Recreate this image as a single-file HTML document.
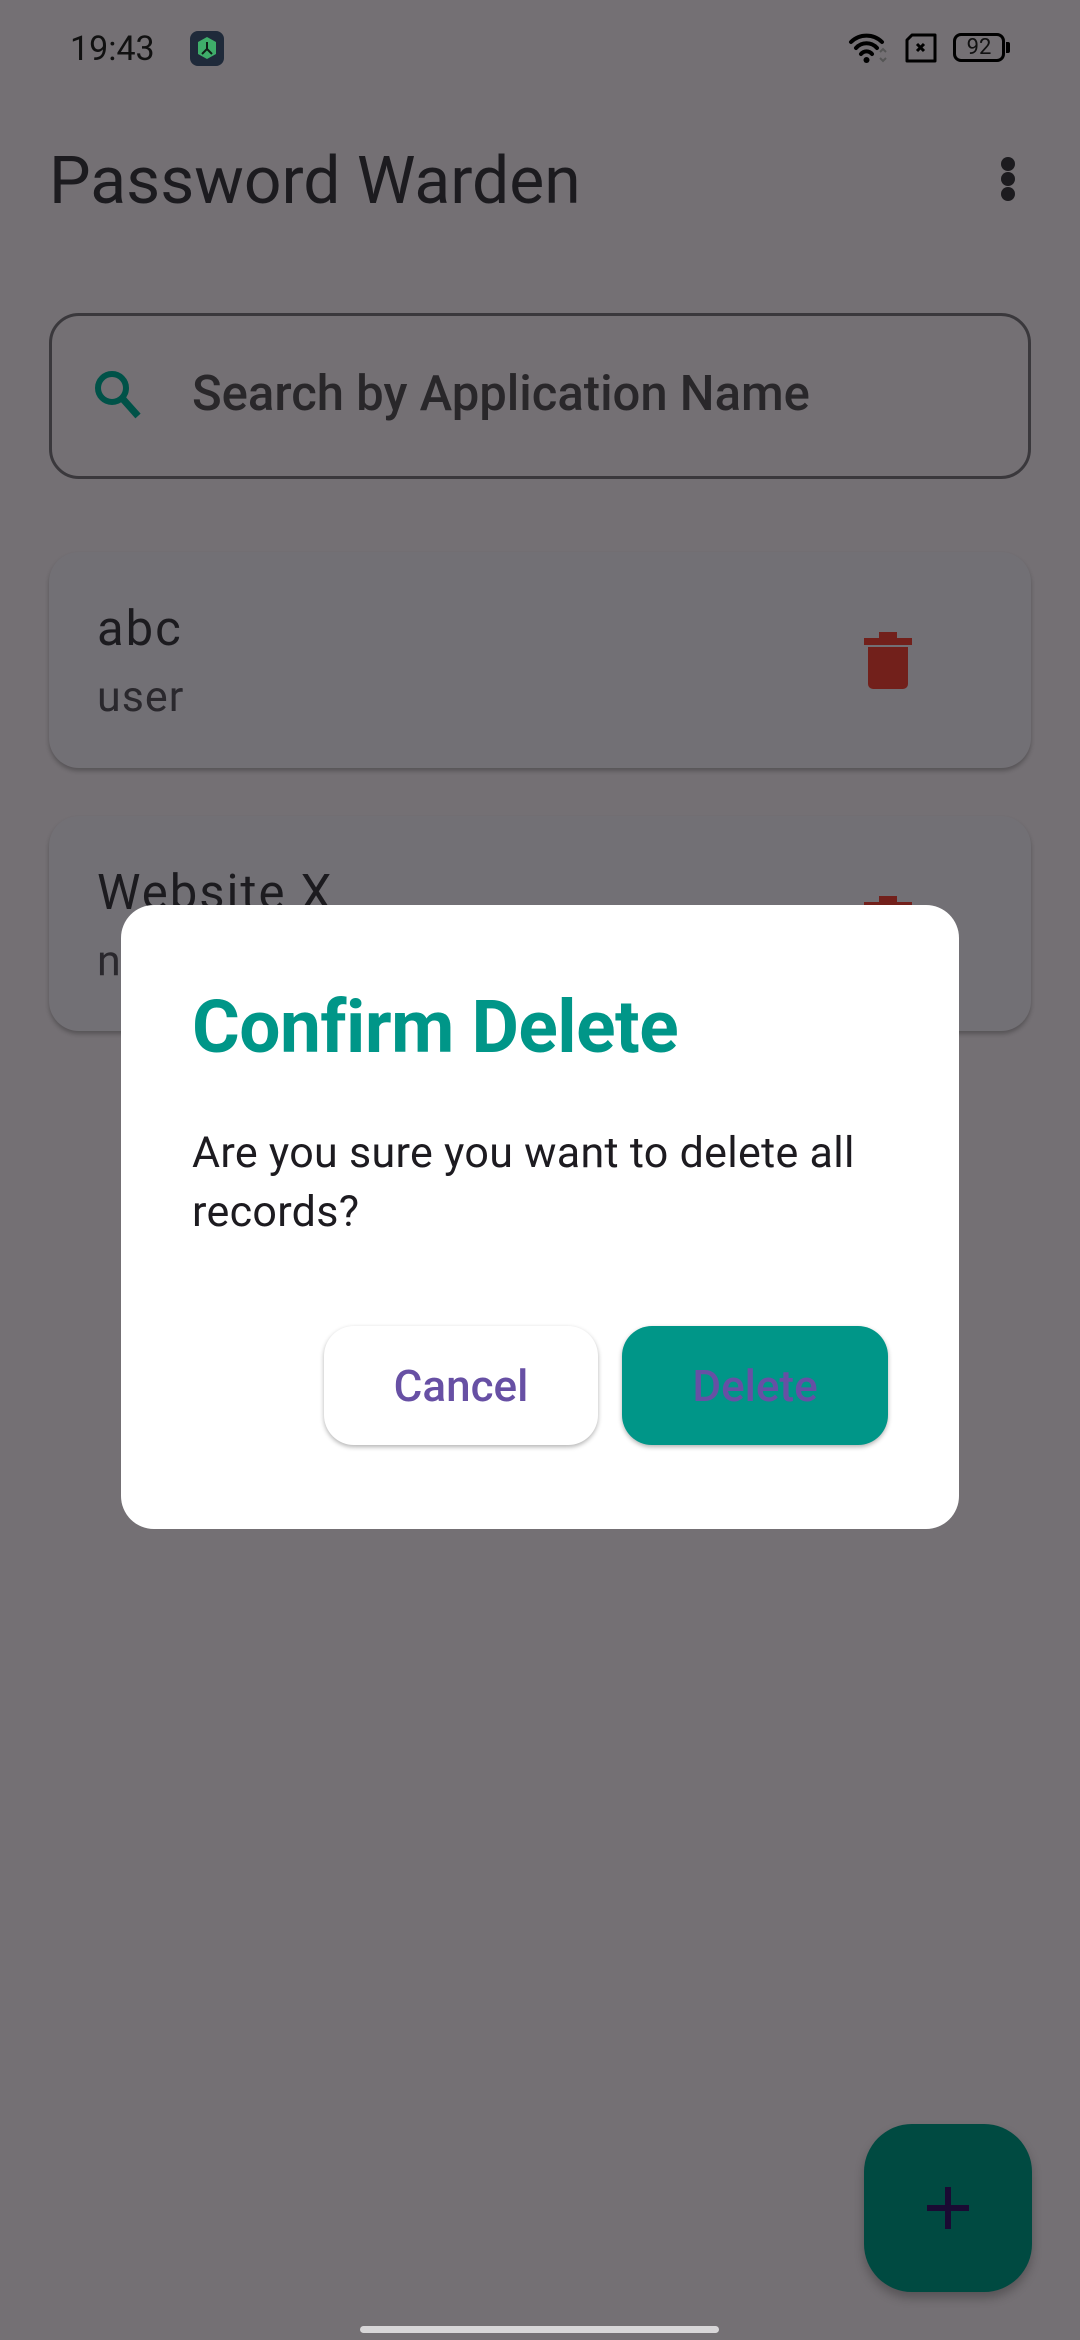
<!DOCTYPE html>
<html><head><meta charset="utf-8"><style>
*{margin:0;padding:0;box-sizing:border-box}
html,body{width:1080px;height:2340px;overflow:hidden}
body{background:#747074;position:relative;font-family:"Roboto","Liberation Sans",sans-serif}
.a{position:absolute}
</style></head><body>
<div class="a" style="left:70px;top:29px;font-size:34px;color:#111;letter-spacing:0px">19:43</div>
<div class="a" style="left:190px;top:31px;width:34px;height:35px;border-radius:8px;background:#1f2a3a">
<svg width="34" height="35" viewBox="0 0 34 35"><polygon points="17,6 26,11 26,23 17,28 8,23 8,11" fill="#3fae6a"/><path d="M17 11v7l-5 5M17 18l5 5" stroke="#102018" stroke-width="2" fill="none"/></svg></div>
<svg class="a" style="left:848px;top:31px" width="40" height="34" viewBox="0 0 40 34"><path d="M3 11a22 22 0 0 1 31 0M8 17a14 14 0 0 1 21 0M13 23a7 7 0 0 1 11 0" stroke="#000" stroke-width="4" fill="none" stroke-linecap="round"/><circle cx="18.5" cy="29" r="3" fill="#000"/><path d="M32 21l3-3 3 3M32 27l3 3 3-3" stroke="#555" stroke-width="2" fill="none"/></svg>
<svg class="a" style="left:904px;top:33px" width="34" height="30" viewBox="0 0 34 30"><path d="M8 2h23v26H3V7z" stroke="#000" stroke-width="3" fill="none" stroke-linejoin="round"/><path d="M13 11l7 7M20 11l-7 7" stroke="#000" stroke-width="3"/></svg>
<div class="a" style="left:953px;top:33px;width:52px;height:29px;border:3px solid #000;border-radius:8px;font-size:22px;line-height:23px;text-align:center;color:#111">92</div>
<div class="a" style="left:1006px;top:42px;width:4px;height:11px;background:#000;border-radius:0 2px 2px 0"></div>

<div class="a" style="left:49px;top:142px;font-size:66px;color:#1c1b1f;line-height:80px">Password Warden</div>
<div class="a" style="left:1001px;top:157px;width:14px;height:14px;border-radius:50%;background:#1c1b1f"></div>
<div class="a" style="left:1001px;top:172px;width:14px;height:14px;border-radius:50%;background:#1c1b1f"></div>
<div class="a" style="left:1001px;top:187px;width:14px;height:14px;border-radius:50%;background:#1c1b1f"></div>

<div class="a" style="left:49px;top:313px;width:982px;height:166px;border:3px solid #3a383c;border-radius:30px"></div>
<svg class="a" style="left:90px;top:366px" width="60" height="60" viewBox="0 0 60 60"><circle cx="22" cy="22" r="14" stroke="#005248" stroke-width="6" fill="none"/><path d="M32 32l16 18" stroke="#005248" stroke-width="7"/></svg>
<div class="a" style="left:192px;top:364px;font-size:49px;font-weight:500;color:#29272a;line-height:60px">Search by Application Name</div>

<div class="a" style="left:49px;top:552px;width:982px;height:216px;border-radius:30px;background:#727075;box-shadow:0 3px 4px rgba(0,0,0,.25)"></div>
<div class="a" style="left:97px;top:599px;font-size:49px;color:#1c1b1f;line-height:60px;letter-spacing:2px">abc</div>
<div class="a" style="left:97px;top:669px;font-size:43px;color:#2a282d;line-height:56px;letter-spacing:1px">user</div>
<svg class="a" style="left:862px;top:628px" width="52" height="62" viewBox="0 0 52 62"><path d="M2 10h48v7H2zM17 4h18v7H17z" fill="#72201b"/><path d="M6 19h40v37a5 5 0 0 1-5 5H11a5 5 0 0 1-5-5z" fill="#72201b"/></svg>

<div class="a" style="left:49px;top:816px;width:982px;height:215px;border-radius:30px;background:#727075;box-shadow:0 3px 4px rgba(0,0,0,.25)"></div>
<div class="a" style="left:97px;top:863px;font-size:49px;color:#1c1b1f;line-height:60px;letter-spacing:2px">Website X</div>
<div class="a" style="left:97px;top:933px;font-size:43px;color:#2a282d;line-height:56px;letter-spacing:1px">name</div>
<svg class="a" style="left:862px;top:892px" width="52" height="62" viewBox="0 0 52 62"><path d="M2 10h48v7H2zM17 4h18v7H17z" fill="#72201b"/><path d="M6 19h40v37a5 5 0 0 1-5 5H11a5 5 0 0 1-5-5z" fill="#72201b"/></svg>

<div class="a" style="left:121px;top:905px;width:838px;height:624px;border-radius:33px;background:#fff"></div>
<div class="a" style="left:192px;top:982px;font-size:73px;font-weight:bold;color:#009688;line-height:90px;letter-spacing:-0.5px">Confirm Delete</div>
<div class="a" style="left:192px;top:1124px;width:720px;font-size:43px;color:#1d1b20;line-height:59px;letter-spacing:0.3px">Are you sure you want to delete all records?</div>
<div class="a" style="left:324px;top:1326px;width:274px;height:119px;border-radius:30px;background:#fff;box-shadow:0 2px 5px rgba(0,0,0,.3);text-align:center;line-height:121px;font-size:44px;font-weight:500;color:#6750a4">Cancel</div>
<div class="a" style="left:622px;top:1326px;width:266px;height:119px;border-radius:30px;background:#009688;box-shadow:0 2px 5px rgba(0,0,0,.3);text-align:center;line-height:121px;font-size:44px;font-weight:500;color:#6750a4">Delete</div>

<div class="a" style="left:864px;top:2124px;width:168px;height:168px;border-radius:48px;background:#004a41;box-shadow:0 6px 10px rgba(0,0,0,.25)"></div>
<div class="a" style="left:927px;top:2205px;width:42px;height:6px;background:#1a0a33"></div>
<div class="a" style="left:945px;top:2187px;width:6px;height:42px;background:#1a0a33"></div>

<div class="a" style="left:360px;top:2326px;width:359px;height:7px;border-radius:4px;background:#d8d6d8"></div>
</body></html>
